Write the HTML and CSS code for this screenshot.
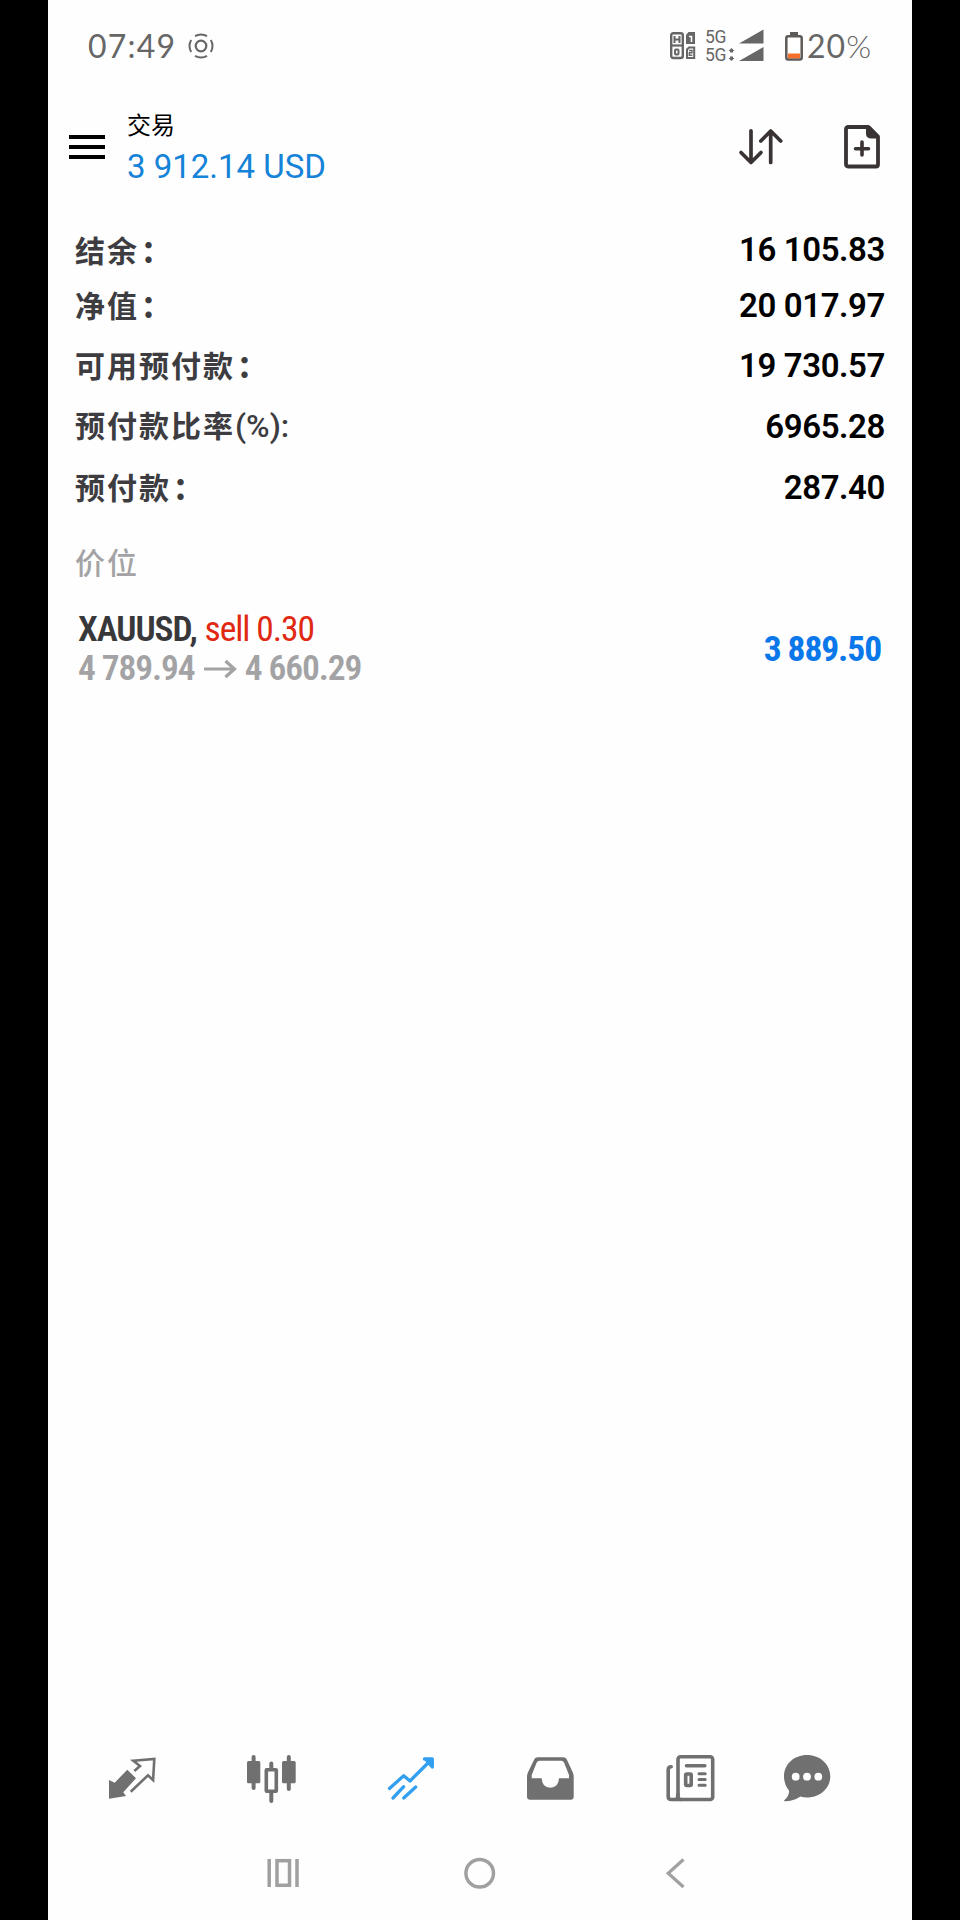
FILE: index.html
```html
<!DOCTYPE html>
<html lang="zh-CN">
<head>
    <meta charset="UTF-8">
    <meta name="viewport" content="width=device-width, initial-scale=1.0">
    <title>交易</title>
    <link rel="stylesheet" href="styles.css">
</head>
<body>
<div class="screen">
    <!-- 状态栏 -->
    <div class="status-bar">
        <span class="clock">07:49</span>
        <svg class="record-icon" width="26" height="26" viewBox="0 0 26 26" fill="none" stroke="#666" stroke-width="2">
            <circle cx="13" cy="13" r="5.3" stroke-width="2.2"/>
            <circle cx="13" cy="13" r="11.5" pathLength="80" stroke-dasharray="14 6" stroke-dashoffset="7"/>
        </svg>
        <svg class="hd-icon" width="26" height="28" viewBox="0 0 26 28" fill="none" stroke="#666">
            <rect x="1.2" y="1.2" width="11.6" height="24.8" rx="2" stroke-width="2.4"/>
            <path d="M1 13.5h12" stroke-width="2.2"/>
            <path d="M4.5 4v7M9.5 4v7M4.5 7.5h5" stroke-width="2"/>
            <rect x="5" y="17.5" width="3.5" height="5" rx="1" stroke-width="2"/>
            <path d="M18.500 0H25V12H16V3z" fill="#666" stroke="none"/>
            <path d="M19 4.500h2.500V10" stroke="#fff" stroke-width="1.6"/>
            <path d="M19 15.500h5.200V26H17V17.500z" stroke-width="2"/>
            <path d="M19 18.500h3v2.200h-2.700v2.600h3" stroke-width="1.4"/>
        </svg>
        <div class="network">
            <span>5G</span>
            <span>5G</span>
        </div>
        <svg class="signal-icon" width="36" height="34" viewBox="0 0 36 34" fill="#666">
            <path d="M35.500 .5V14.500H11zM35.500 18V32H11z"/>
            <path d="M3.500 19l3 3H5v1.500H2V22H.5zM3.500 32l3-3H5v-1.500H2V29H.5z"/>
        </svg>
        <svg class="battery-icon" width="18" height="29" viewBox="0 0 18 29">
            <rect x="5" y="0" width="8" height="4" fill="#5e5a58"/>
            <rect x="1.300" y="4.300" width="15.400" height="23.200" rx="2" fill="#fff" stroke="#5e5a58" stroke-width="2.500"/>
            <rect x="3" y="21.500" width="12" height="4.800" fill="#f4702a"/>
        </svg>
        <span class="battery-text">20<span class="percent">%</span></span>
    </div>

    <!-- 标题栏 -->
    <header class="app-bar">
        <div class="menu-btn"><i></i><i></i><i></i></div>
        <div class="title">
            <div class="title-text">交易</div>
            <div class="title-profit">3 912.14 USD</div>
        </div>
        <svg class="sort-icon" width="46" height="40" viewBox="0 0 46 40" fill="none" stroke="#3a3334" stroke-width="3.700" stroke-linecap="round" stroke-linejoin="round">
            <path d="M13 3.800V35M3 25.500l10 10 10-10"/>
            <path d="M32.700 35.500V4M22.800 14l9.900-10 10 10"/>
        </svg>
        <svg class="order-icon" width="38" height="46" viewBox="0 0 38 46">
            <path d="M5 3H25.500L35 12.500V40.500a2 2 0 0 1-2 2H5a2 2 0 0 1-2-2V5a2 2 0 0 1 2-2z" fill="none" stroke="#3a3334" stroke-width="3.800" stroke-linejoin="round"/>
            <path d="M23 2.500V9.500q0 5 5.500 5H36V11.500L27 2z" fill="#3a3334"/>
            <path d="M19 18v13M12.500 24.700h13" stroke="#3a3334" stroke-width="3.600" stroke-linecap="round"/>
        </svg>
    </header>

    <!-- 账户信息 -->
    <div class="account">
        <div class="account-row first"><span class="label">结余<b>：</b></span><span class="value">16 105.83</span></div>
        <div class="account-row second"><span class="label">净值<b>：</b></span><span class="value">20 017.97</span></div>
        <div class="account-row"><span class="label">可用预付款<b>：</b></span><span class="value">19 730.57</span></div>
        <div class="account-row"><span class="label">预付款比率<span class="latin">(%):</span></span><span class="value">6965.28</span></div>
        <div class="account-row"><span class="label">预付款<b>：</b></span><span class="value">287.40</span></div>
    </div>

    <!-- 持仓 -->
    <div class="section-title">价位</div>
    <div class="position">
        <div class="position-info">
            <div class="position-line"><b class="symbol">XAUUSD,</b><span class="side">sell 0.30</span></div>
            <div class="position-line prices">
                <span>4 789.94</span>
                <svg width="34" height="20" viewBox="0 0 34 20" fill="none" stroke="#a3a3a5" stroke-width="3.200">
                    <path d="M1 10H31M22.500 2l9 8-9 8"/>
                </svg>
                <span>4 660.29</span>
            </div>
        </div>
        <div class="position-profit">3 889.50</div>
    </div>

    <!-- 底部标签栏 -->
    <nav class="tab-bar">
        <svg viewBox="0 0 50 50" fill="#707070">
            <path d="M2 26l5.700 2.700L20.300 15.700l8.700 8.600L16.300 38.300 19 42 2 44.700z"/>
            <path d="M27.300 17l5.700-5-6.700-5.300L47.300 5l-1.200 21.200-5.100-4.900L23.700 37.700" fill="none" stroke="#707070" stroke-width="2.600"/>
        </svg>
        <svg viewBox="0 0 50 50" fill="#707070">
            <rect x="0" y="7" width="13.300" height="22.300" rx="1.500"/>
            <rect x="4.600" y="1" width="4" height="35" rx="2"/>
            <rect x="19.300" y="15.700" width="10" height="21.600" rx=".5" fill="none" stroke="#707070" stroke-width="3.600"/>
            <path d="M24.300 9.500v5M24.300 39v8" stroke="#707070" stroke-width="4" stroke-linecap="round"/>
            <rect x="35" y="7" width="13.700" height="22.300" rx="1.500"/>
            <rect x="39.800" y="1" width="4" height="36" rx="2"/>
        </svg>
        <svg viewBox="0 0 50 50" fill="none" stroke="#329ff0" stroke-width="3.300" stroke-linecap="round" stroke-linejoin="round">
            <path d="M2.500 34.500L16.700 21.700 23 27 44.500 5.500"/>
            <path d="M37.500 5H45.300V13L39 5.500" fill="#329ff0"/>
            <path d="M16.700 32.700L6 44M28.700 33L16.700 44"/>
        </svg>
        <svg viewBox="0 0 50 50">
            <path fill="#707070" fill-rule="evenodd" d="M11 3.300H36Q39 3.300 40.300 6.500L45.800 18.500Q46.700 20.500 46.700 23V42.500Q46.700 45.700 43.500 45.700H3.200Q0 45.700 0 42.500V23Q0 20.500 .9 18.500L6.700 6.500Q8 3.300 11 3.300zM12.500 6.800Q10.500 6.800 9.700 8.500L4.700 21V24.300H14.700Q15 33.700 23.300 33.700T32 24.300H42V21L37 8.500Q36.200 6.800 34.200 6.800z"/>
        </svg>
        <svg viewBox="0 0 50 50" fill="none" stroke="#707070" stroke-width="3.600" stroke-linecap="round">
            <rect x="11" y="2.800" width="34.700" height="42.700" rx="2.500"/>
            <path d="M4.200 12.800Q1.200 12.800 1.200 16V42.500Q1.200 45.500 4.200 45.500H14M11 40Q11 44 9 45.500"/>
            <path d="M19.500 11.800H37.800"/>
            <rect x="18.700" y="20" width="5.500" height="11.500" rx="1"/>
            <path d="M32 19.700h6.200M32 25.500h6.200M32 31.300h6.200" stroke-width="3"/>
        </svg>
        <svg class="chat-icon" viewBox="0 0 50 50">
            <path fill="#707070" d="M25 1C38 1 48.300 10.300 48.300 22.300S38 43.500 25 43.500Q21.500 43.500 18.500 42.500 11 47.500 2.500 47.300 1.600 46.800 2.500 46 7.500 41.500 7 36.500 2 30.500 2 22.300C2 10.300 12 1 25 1z"/>
            <g fill="#fff"><circle cx="13.700" cy="22.700" r="3.900"/><circle cx="25" cy="22.700" r="3.900"/><circle cx="36.300" cy="22.700" r="3.900"/></g>
        </svg>
    </nav>

    <!-- 系统导航 -->
    <div class="system-nav">
        <svg width="32" height="32" viewBox="0 0 32 32" fill="none" stroke="#a0a0a0" stroke-width="3.500">
            <path d="M2.200 2v28M30 2v28"/>
            <rect x="10" y="3.700" width="12.500" height="24.600"/>
        </svg>
        <svg width="32" height="32" viewBox="0 0 32 32" fill="none" stroke="#a0a0a0" stroke-width="3.500">
            <circle cx="15.700" cy="16.200" r="13.800"/>
        </svg>
        <svg width="32" height="32" viewBox="0 0 32 32" fill="none" stroke="#a0a0a0" stroke-width="3.200">
            <path d="M22.500 2.500L7.200 16.200 22.500 30"/>
        </svg>
    </div>
</div>
</body>
</html>
```

FILE: styles.css
```css
* {
    margin: 0;
    padding: 0;
    box-sizing: border-box;
}

body {
    background: #000;
    font-family: Roboto, 'Noto Sans CJK SC', sans-serif;
}

svg {
    display: block;
    flex-shrink: 0;
}

.screen {
    width: 864px;
    height: 1920px;
    margin: 0 auto;
    background: #fefefe;
    display: flex;
    flex-direction: column;
}

/* 状态栏 */
.status-bar {
    height: 92px;
    padding: 0 39px 0 40px;
    display: flex;
    align-items: center;
    color: #666;
}

.clock,
.battery-text {
    font-family: Lato, sans-serif;
    font-size: 32px;
    line-height: 36px;
    letter-spacing: 1.2px;
    white-space: nowrap;
}

.clock {
    width: 100px;
}

.percent {
    font-weight: 300;
}

.hd-icon {
    margin-left: auto;
}

.network {
    margin-left: 9px;
    width: 22px;
    display: flex;
    flex-direction: column;
    font-size: 17.5px;
    line-height: 18px;
    letter-spacing: -0.4px;
}

.signal-icon {
    margin-left: 1px;
}

.battery-icon {
    margin: 0 4px 0 21px;
}

.battery-text {
    width: 66px;
    letter-spacing: 1px;
}

/* 标题栏 */
.app-bar {
    height: 110px;
    padding: 0 31px 0 21px;
    display: flex;
    align-items: center;
}

.menu-btn {
    display: flex;
    flex-direction: column;
    gap: 6px;
    width: 36px;
}

.menu-btn i {
    height: 4px;
    background: #000;
}

.title {
    flex: 1;
    margin-left: 22px;
    padding-top: 4px;
}

.title-text {
    font-size: 24px;
    line-height: 30px;
    color: #000;
}

.title-profit {
    margin-top: 6px;
    font-size: 33px;
    line-height: 40px;
    letter-spacing: 0;
    color: #1583d8;
}

.order-icon {
    margin-left: 59px;
}

/* 账户信息 */
.account {
    padding: 18px 27px 0;
}

.account-row {
    height: 61px;
    display: flex;
    align-items: center;
    justify-content: space-between;
}

.account-row.first {
    height: 60px;
}

.account-row.second {
    height: 51px;
    margin-bottom: 4px;
}

.label {
    padding-bottom: 3px;
    font-family: 'Noto Sans CJK SC', sans-serif;
    font-size: 30px;
    line-height: 40px;
    font-weight: 700;
    letter-spacing: 2px;
    color: #3d3d41;
}

.label b {
    margin-left: 2px;
}

.latin {
    font-family: Roboto, sans-serif;
    font-size: 32px;
    font-weight: 500;
    letter-spacing: 0;
}

.value {
    font-size: 33px;
    line-height: 40px;
    font-weight: 600;
    letter-spacing: -0.4px;
    color: #000;
}

/* 持仓 */
.section-title {
    height: 60px;
    margin-top: 17px;
    padding-left: 27px;
    font-family: 'Noto Sans CJK SC', sans-serif;
    font-size: 30px;
    font-weight: 500;
    line-height: 52px;
    letter-spacing: 2px;
    color: #a3a3a5;
}

.position {
    padding: 15px 31px 0 30px;
    display: flex;
    align-items: center;
    justify-content: space-between;
    font-family: 'Roboto Condensed', Roboto, sans-serif;
    font-stretch: 75%;
    font-size: 35.5px;
    letter-spacing: -1.1px;
}

.position-line {
    height: 39px;
    line-height: 39px;
    display: flex;
    align-items: center;
}

.symbol {
    font-weight: 600;
    color: #38383b;
    margin-right: 8px;
}

.side {
    color: #e02812;
}

.prices {
    gap: 8px;
    font-weight: 600;
    color: #a3a3a5;
}

.position-profit {
    font-weight: 700;
    color: #0a78ea;
}

/* 底部标签栏 */
.tab-bar {
    margin-top: auto;
    height: 86px;
    padding-left: 59px;
    display: flex;
    gap: 90px;
}

.tab-bar svg {
    width: 50px;
    height: 50px;
    overflow: visible;
}

.tab-bar .chat-icon {
    margin-left: -25px;
}

/* 系统导航 */
.system-nav {
    height: 80px;
    padding: 17px 219px 0;
    display: flex;
    justify-content: space-between;
}
```
